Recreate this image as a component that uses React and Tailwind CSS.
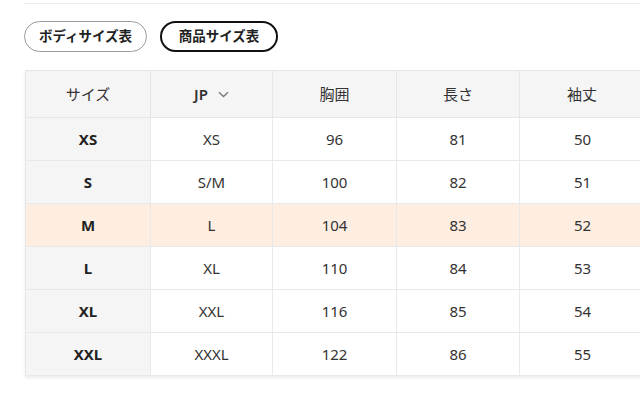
import React from "react";

const ROWS = [
  ["XS", "XS", "96", "81", "50"],
  ["S", "S/M", "100", "82", "51"],
  ["M", "L", "104", "83", "52"],
  ["L", "XL", "110", "84", "53"],
  ["XL", "XXL", "116", "85", "54"],
  ["XXL", "XXXL", "122", "86", "55"],
];

const HIGHLIGHT = "M";

function Chevron() {
  return (
    <svg width="11" height="7" viewBox="0 0 11 7" className="ml-[10px] mt-[1px]">
      <path d="M1 1.2 L5.5 5.5 L10 1.2" fill="none" stroke="#777" strokeWidth="1.3" />
    </svg>
  );
}

export default function App() {
  return (
    <div
      className="w-[640px] h-[415px] overflow-hidden bg-white text-[#333]"
      style={{ fontFamily: '"Noto Sans", "Noto Sans CJK JP", sans-serif' }}
    >
      {/* 上の区切り線 */}
      <div className="ml-6 h-[4px] border-b border-[#ececec]" />

      <div className="flex gap-[13px] pl-6 pt-[17px]">
        <button className="h-[31px] w-[123px] rounded-full border border-[#9a9a9a] text-[13.5px] font-bold text-[#222]">
          ボディサイズ表
        </button>
        <button className="h-[31px] w-[118px] rounded-full border-2 border-[#111] text-[13.5px] font-bold text-[#222]">
          商品サイズ表
        </button>
      </div>

      <div className="ml-[25px] mt-[18px] w-[680px] border-t border-l border-[#e6e6e6] shadow-[0_2px_3px_rgba(0,0,0,0.08)]">
        <div className="grid grid-cols-[125px_122px_124px_123px_186px] h-[47px] bg-[#f5f5f5] text-[15px] border-b border-[#e6e6e6]">
          <div className="flex items-center justify-center border-r border-[#e6e6e6]">サイズ</div>
          <div className="flex items-center justify-center border-r border-[#e6e6e6]">
            <span className="font-semibold">JP</span>
            <Chevron />
          </div>
          <div className="flex items-center justify-center border-r border-[#e6e6e6]">胸囲</div>
          <div className="flex items-center justify-center border-r border-[#e6e6e6]">長さ</div>
          <div className="flex items-center justify-start pl-[47px] border-r border-[#e6e6e6]">袖丈</div>
        </div>
        {ROWS.map((r) => {
          const hi = r[0] === HIGHLIGHT;
          return (
            <div
              key={r[0]}
              className={`grid grid-cols-[125px_122px_124px_123px_186px] h-[43px] text-[15px] border-b border-[#e9e9e9] ${
                hi ? "bg-[#fdeee1]" : "bg-white"
              }`}
            >
              <div
                className={`flex items-center justify-center font-bold text-[#222] border-r border-[#e9e9e9] ${
                  hi ? "" : "bg-[#f5f5f5]"
                }`}
              >
                {r[0]}
              </div>
              <div className="flex items-center justify-center border-r border-[#e9e9e9]">{r[1]}</div>
              <div className="flex items-center justify-center border-r border-[#e9e9e9]">{r[2]}</div>
              <div className="flex items-center justify-center border-r border-[#e9e9e9]">{r[3]}</div>
              <div className="flex items-center justify-start pl-[54px] border-r border-[#e9e9e9]">{r[4]}</div>
            </div>
          );
        })}
      </div>
    </div>
  );
}
